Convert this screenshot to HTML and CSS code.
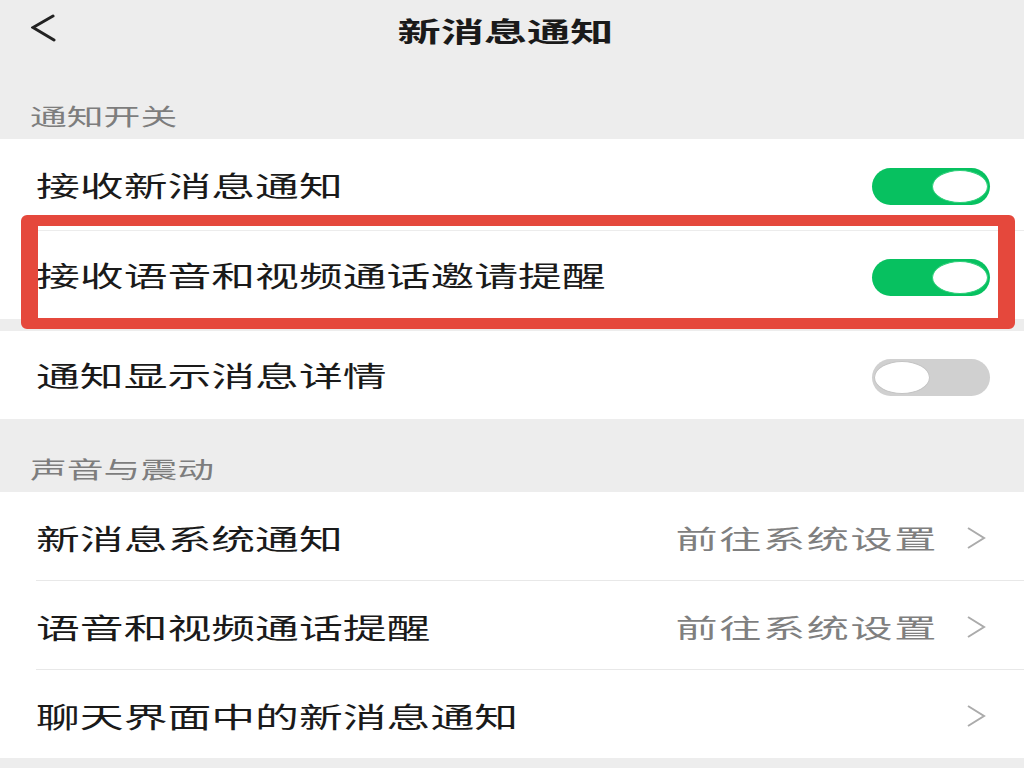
FILE: index.html
```html
<!DOCTYPE html>
<html lang="zh-CN">
<head>
<meta charset="utf-8">
<title>新消息通知</title>
<link rel="stylesheet" href="styles.css">
</head>
<body>
<div class="page">
  <header class="header">
    <svg class="back" width="26" height="30" viewBox="0 0 26 30"><polyline points="22,2 2,13.5 23,26" fill="none" stroke="#222" stroke-width="3" stroke-linejoin="miter" stroke-linecap="round"/></svg>
    <h1 class="title"><span class="t">新消息通知</span></h1>
    <span class="spacer"></span>
  </header>

  <div class="section-label s1"><span class="t">通知开关</span></div>

  <div class="card">
    <div class="row r1">
      <span class="label"><span class="t">接收新消息通知</span></span>
      <span class="toggle on"><span class="knob"></span></span>
    </div>
    <div class="row r2">
      <span class="label"><span class="t">接收语音和视频通话邀请提醒</span></span>
      <span class="toggle on"><span class="knob"></span></span>
    </div>
  </div>
  <div class="card gap-card">
    <div class="row r3">
      <span class="label"><span class="t">通知显示消息详情</span></span>
      <span class="toggle off"><span class="knob"></span></span>
    </div>
  </div>

  <div class="section-label s2"><span class="t">声音与震动</span></div>

  <div class="card">
    <div class="row link">
      <span class="label"><span class="t">新消息系统通知</span></span>
      <span class="value"><span class="t tr">前往系统设置</span></span>
      <svg class="chev" width="20" height="22" viewBox="0 0 20 22"><polyline points="2,1 18,11 2,21" fill="none" stroke="#ababab" stroke-width="2"/></svg>
    </div>
    <div class="row link">
      <span class="label"><span class="t">语音和视频通话提醒</span></span>
      <span class="value"><span class="t tr">前往系统设置</span></span>
      <svg class="chev" width="20" height="22" viewBox="0 0 20 22"><polyline points="2,1 18,11 2,21" fill="none" stroke="#ababab" stroke-width="2"/></svg>
    </div>
    <div class="row link last">
      <span class="label"><span class="t">聊天界面中的新消息通知</span></span>
      <svg class="chev" width="20" height="22" viewBox="0 0 20 22"><polyline points="2,1 18,11 2,21" fill="none" stroke="#ababab" stroke-width="2"/></svg>
    </div>
  </div>

  <div class="highlight"></div>
</div>
</body>
</html>
```

FILE: styles.css
```css
* { box-sizing: border-box; }

html, body {
  margin: 0;
  padding: 0;
  background: #ededed;
}

body {
  font-family: "Noto Sans CJK SC", "Noto Sans", sans-serif;
  color: #1a1a1a;
  width: 1024px;
  height: 768px;
  overflow: hidden;
}

.page {
  position: relative;
  width: 1024px;
}

.t {
  display: inline-block;
  white-space: nowrap;
  transform: scaleX(1.565);
  transform-origin: left center;
}

.tr {
  transform-origin: right center;
}

.header {
  height: 62px;
  display: grid;
  grid-template-columns: 1fr auto 1fr;
  align-items: center;
  padding-right: 14px;
}

.back {
  margin-left: 31px;
  margin-top: -4px;
}

.title {
  margin: 0;
  font-size: 27px;
  font-weight: 700;
  line-height: 30px;
  color: #1a1a1a;
}

.title .t {
  transform-origin: center center;
  transform: scaleX(1.6);
}

.section-label {
  padding-left: 30px;
  font-size: 23px;
  line-height: 30px;
  color: #7d7d7d;
}

.section-label .t {
  transform: scaleX(1.6);
}

.s1 {
  padding-top: 38px;
  padding-bottom: 9px;
}

.s2 {
  padding-top: 34px;
  padding-bottom: 9px;
}

.card {
  background: #fff;
}

.gap-card {
  margin-top: 12px;
}

.row {
  display: flex;
  align-items: center;
  margin-left: 36px;
  padding-right: 34px;
  font-size: 28px;
  line-height: 32px;
}

.r1 {
  height: 92px;
  border-bottom: 1px solid #ececec;
}

.r2 {
  height: 88px;
}

.r3 {
  height: 88px;
}

.link {
  height: 89px;
  border-bottom: 1px solid #e8e8e8;
  padding-right: 38px;
}

.link .label {
  padding-top: 3px;
}

.link.last {
  height: 88px;
  border-bottom: none;
}

.label {
  flex: 1;
  color: #1a1a1a;
}

.value {
  font-size: 26px;
  letter-spacing: 1px;
  color: #7f7f7f;
  margin-right: 28px;
  padding-top: 3px;
}

.value .t {
  transform: scaleX(1.62);
}

.chev {
  display: block;
  margin-top: 4px;
}

.toggle {
  width: 118px;
  height: 37px;
  border-radius: 999px / 999px;
  display: flex;
  align-items: center;
  padding: 0 2px;
  margin-top: 4px;
}

.toggle.on {
  background: #07c160;
  justify-content: flex-end;
}

.toggle.off {
  background: #d0d0d0;
  justify-content: flex-start;
}

.knob {
  width: 56px;
  height: 33px;
  border-radius: 50%;
  background: #fff;
}

.toggle.on .knob {
  border: 1px solid #2fcf7a;
}

.toggle.off .knob {
  border: 1px solid #c4c4c4;
}

.highlight {
  position: absolute;
  left: 21px;
  top: 215px;
  width: 994px;
  height: 114px;
  border-style: solid;
  border-color: #e5483c;
  border-width: 11px 17px;
  border-radius: 6px;
  pointer-events: none;
}
```
